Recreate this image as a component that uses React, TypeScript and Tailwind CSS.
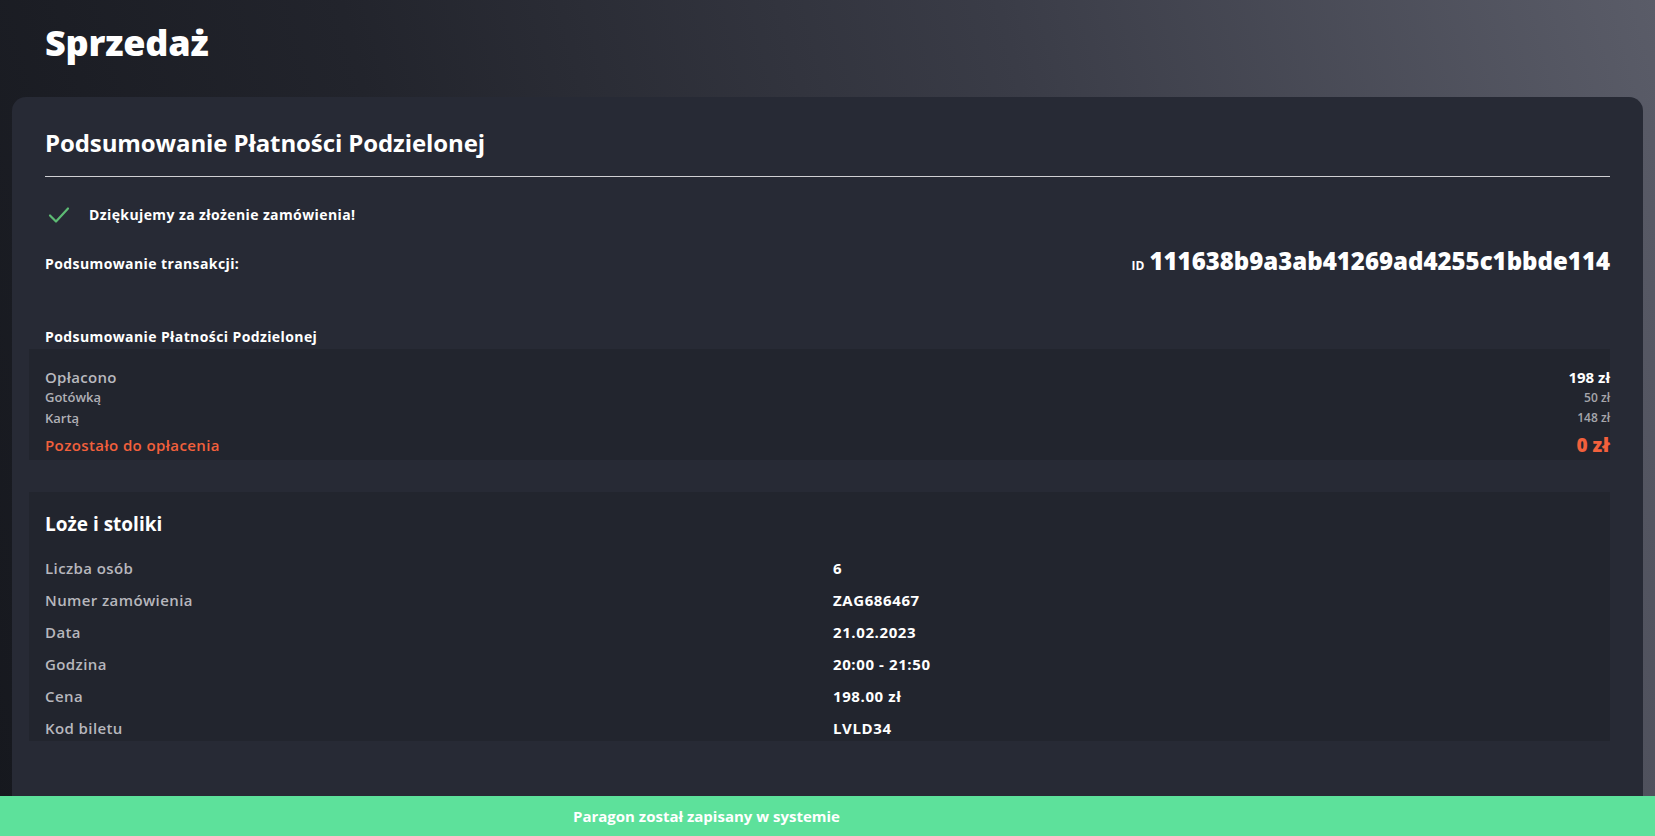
import React from "react";

const font = { fontFamily: "'Open Sans', 'Noto Sans', sans-serif" };

function CheckIcon() {
  return (
    <svg width="22" height="18" viewBox="0 0 22 18" fill="none">
      <path d="M2 9.5 L8 15.5 L20 2.5" stroke="#5dbb74" strokeWidth="2.2" strokeLinecap="round" strokeLinejoin="round" />
    </svg>
  );
}

const rows: [string, string][] = [
  ["Liczba osób", "6"],
  ["Numer zamówienia", "ZAG686467"],
  ["Data", "21.02.2023"],
  ["Godzina", "20:00 - 21:50"],
  ["Cena", "198.00 zł"],
  ["Kod biletu", "LVLD34"],
];

export default function App() {
  return (
    <div
      className="relative h-[836px] w-full overflow-hidden bg-[linear-gradient(75deg,#16181e_0%,#22242c_30%,#3a3c47_65%,#5a5c68_100%)] text-white"
      style={font}
    >
      <div className="flex h-[97px] items-start px-[45px] pt-[20px]">
        <h1 className="text-[36px] leading-[46px] font-extrabold tracking-[-0.2px]">Sprzedaż</h1>
      </div>
      <div className="mx-[12px] h-[760px] rounded-t-[14px] bg-[#272a35] px-[33px] pt-[31px]">
        <h2 className="text-[24px] leading-[30px] font-bold tracking-[-0.1px]">Podsumowanie Płatności Podzielonej</h2>
        <div className="mt-[18px] h-px bg-[#d0d0d4]" />
        <div className="mt-[28px] flex items-center gap-[19px] pl-[3px]">
          <CheckIcon />
          <span className="text-[14px] leading-[20px] font-bold tracking-[0.4px]">Dziękujemy za złożenie zamówienia!</span>
        </div>
        <div className="mt-[27px] flex items-center justify-between">
          <span className="text-[14px] leading-[20px] font-bold tracking-[0.4px]">Podsumowanie transakcji:</span>
          <div className="-mt-[6px] flex items-baseline gap-[5px]">
            <span className="text-[12px] font-bold">ID</span>
            <span className="text-[24px] leading-[30px] font-extrabold">111638b9a3ab41269ad4255c1bbde114</span>
          </div>
        </div>
        <div className="mt-[51px] text-[14px] leading-[20px] font-bold tracking-[0.4px]">Podsumowanie Płatności Podzielonej</div>
        <div className="mt-[2px] -ml-[16px] bg-[#22252e] pb-[2px] pl-[16px] pt-[18px]">
          <div className="flex items-center justify-between leading-[20px]">
            <span className="text-[15px] font-semibold tracking-[0.3px] text-[#b9b9bf]">Opłacono</span>
            <span className="text-[15px] font-bold">198 zł</span>
          </div>
          <div className="flex items-center justify-between leading-[21px]">
            <span className="text-[13px] font-semibold text-[#b0b0b6]">Gotówką</span>
            <span className="text-[12px] font-semibold text-[#a5a5ab]">50 zł</span>
          </div>
          <div className="flex items-center justify-between leading-[20px]">
            <span className="text-[13px] font-semibold text-[#b0b0b6]">Kartą</span>
            <span className="text-[12px] font-semibold text-[#a5a5ab]">148 zł</span>
          </div>
          <div className="mt-[4px] flex items-center justify-between leading-[26px]">
            <span className="text-[15px] font-semibold tracking-[0.4px] text-[#f2603c]">Pozostało do opłacenia</span>
            <span className="text-[19px] font-extrabold text-[#f2603c]">0 zł</span>
          </div>
        </div>
        <div className="mt-[32px] -ml-[16px] bg-[#22252e] pb-[3px] pl-[16px] pt-[20px]">
          <h3 className="text-[19px] leading-[24px] font-bold">Loże i stoliki</h3>
          <div className="mt-[22px] flex flex-col gap-[12px]">
            {rows.map(([k, v]) => (
              <div key={k} className="flex h-[20px] items-center">
                <span className="w-[788px] text-[15px] font-semibold tracking-[0.4px] text-[#b7b7bd]">{k}</span>
                <span className="text-[15px] font-bold tracking-[0.6px]">{v}</span>
              </div>
            ))}
          </div>
        </div>
      </div>
      <div className="absolute bottom-0 left-0 right-0 flex h-[40px] items-center bg-[#5de19b] pl-[573px]">
        <span className="text-[15px] font-bold">Paragon został zapisany w systemie</span>
      </div>
    </div>
  );
}
